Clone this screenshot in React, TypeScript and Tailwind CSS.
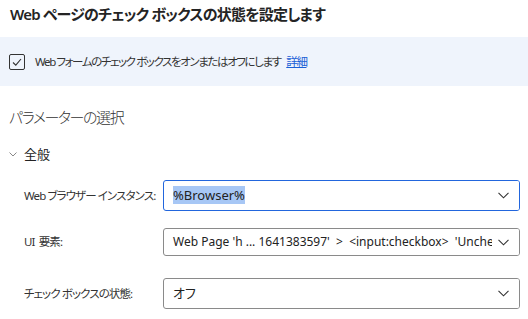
import { ReactNode } from "react";

const font = "[font-family:'Noto_Sans','Noto_Sans_CJK_JP',sans-serif] [font-feature-settings:'palt']";

function Chevron({ className }: { className?: string }) {
  return (
    <svg width="11" height="7" viewBox="0 0 11 7" className={className}>
      <polyline points="0.5,0.8 5.5,5.8 10.5,0.8" fill="none" stroke="#333" strokeWidth="1.1" />
    </svg>
  );
}

interface IField {
  label: string;
  focused?: boolean;
  height: string;
  size?: string;
  children: ReactNode;
}

function Field({ label, focused, height, size = "text-[13px]", children }: IField) {
  return (
    <div className="flex items-center">
      <div className="w-[163px] shrink-0 whitespace-pre pl-[24px] text-[11.5px] tracking-[-0.9px] text-[#333]">
        {label}
      </div>
      <div
        className={`relative mr-[8px] flex flex-1 items-center overflow-hidden rounded-[3px] border bg-white pl-[9px] ${height} ${
          focused ? "border-[#2266dd]" : "border-[#8a8a8a]"
        }`}
      >
        <div className={`whitespace-nowrap text-[#222] ${size}`}>{children}</div>
        <div className="absolute right-0 top-0 flex h-full items-center bg-white pl-[6px] pr-[10px]">
          <Chevron />
        </div>
      </div>
    </div>
  );
}

export default function App() {
  return (
    <div className={`h-[319px] w-[528px] overflow-hidden bg-white ${font}`}>
      <div className="h-[37px] pl-[10px] pt-[2px] text-[15px] font-semibold leading-[24px] tracking-[-0.8px] text-[#242424]">
        Web ページのチェック ボックスの状態を設定します
      </div>
      <div className="flex h-[49px] items-center bg-[#eff4fc] pl-[9px]">
        <div className="flex h-[16px] w-[16px] items-center justify-center rounded-[2px] border border-[#333]">
          <svg width="12" height="12" viewBox="0 0 12 12">
            <polyline points="2,6.5 4.8,9.2 10,3" fill="none" stroke="#333" strokeWidth="1.1" />
          </svg>
        </div>
        <span className="ml-[10px] text-[11.5px] tracking-[-1.4px] text-[#333]">
          Web フォームのチェック ボックスをオンまたはオフにします{" "}
          <a className="ml-[4px] text-[#1a5fd6] underline">詳細</a>
        </span>
      </div>
      <div className="mt-[19px] pl-[9px] text-[15px] font-light leading-[24px] tracking-[-1.4px] text-[#333]">
        パラメーターの選択
      </div>
      <div className="mt-[15px] flex items-center pl-[9px] leading-[20px]">
        <svg width="8" height="5" viewBox="0 0 8 5">
          <polyline points="0.5,0.5 4,4 7.5,0.5" fill="none" stroke="#888" strokeWidth="1" />
        </svg>
        <span className="ml-[7px] text-[13px] text-[#222]">全般</span>
      </div>
      <div className="mt-[16px]">
        <Field label="Web ブラウザー インスタンス:" focused height="h-[31px]">
          <span className="bg-[#a7c7f5]">%Browser%</span>
        </Field>
      </div>
      <div className="mt-[17px]">
        <Field label="UI  要素:" height="h-[28px]" size="text-[12px]">
          Web Page 'h ... 1641383597'&nbsp; &gt;&nbsp; &lt;input:checkbox&gt;&nbsp; 'Unchecked'
        </Field>
      </div>
      <div className="mt-[22px]">
        <Field label="チェック ボックスの状態:" height="h-[31px]">
          オフ
        </Field>
      </div>
    </div>
  );
}
